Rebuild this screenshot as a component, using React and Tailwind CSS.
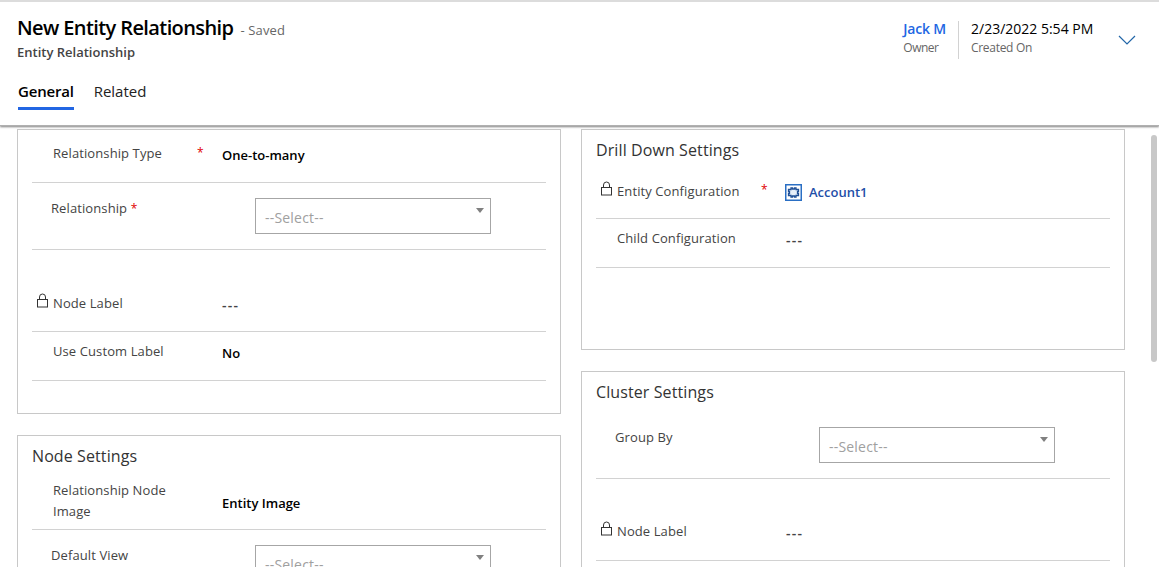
const font = { fontFamily: '"Open Sans", "Noto Sans", sans-serif' };

const Lock = () => (
  <svg width="13" height="15" viewBox="0 0 13 15" fill="none" stroke="#333" strokeWidth="1" className="shrink-0">
    <rect x="1.5" y="6.5" width="10" height="7.5" />
    <path d="M3.5 6.500V4a3 3 0 0 1 6 0v2.500" />
  </svg>
);

const EntityIcon = () => (
  <svg width="17" height="17" viewBox="0 0 17 17" fill="none" className="shrink-0">
    <rect x="0.75" y="0.75" width="15.500" height="15.500" stroke="#2a6fc4" strokeWidth="1.500" />
    <path d="M3.500 5.500H6V4h1.500v1h2V4H11v1.500h2.500V7.500H12.500v2h1V11.500H11V13H9.500v-1h-2v1H6V11.500H3.500V9.500h1v-2h-1z" fill="#e8f0fa" stroke="#1f4f96" strokeWidth="1.300" strokeLinejoin="miter" />
  </svg>
);

const Star = ({ className }) => <span className={`text-[#e00000] text-[12px] leading-none ${className}`}>*</span>;

const Select = () => (
  <div className="w-[236px] h-[36px] border border-[#a6a6a6] flex justify-between pl-[9px] pr-[6px] bg-white">
    <span className="text-[14px] tracking-[0.2px] text-[#a0a0a0] leading-[37px]">--Select--</span>
    <svg width="8" height="5" viewBox="0 0 8 5" className="mt-[9px]">
      <path d="M0 0h8L4 5z" fill="#808080" />
    </svg>
  </div>
);

const Label = ({ children, lock, w, mt }) => (
  <div className={`flex items-start shrink-0 ${w} ${mt}`}>
    {lock && <span className="w-[21px] pl-[4px] -mt-[1px]"><Lock /></span>}
    <span className={`text-[13px] tracking-[0.1px] leading-[18px] text-[#444444] ${lock ? "" : "pl-[21px]"}`}>{children}</span>
  </div>
);

const Value = ({ children, mt }) => (
  <span className={`text-[13px] leading-[18px] font-semibold text-black ml-[1px] ${mt}`}>{children}</span>
);

const Empty = ({ mt }) => (
  <span className={`text-[14px] tracking-[1.300px] leading-[18px] text-[#444444] font-semibold ml-[1px] ${mt}`}>---</span>
);

const Card = ({ title, children, className = "" }) => (
  <section className={`shrink-0 border border-[#c8c8c8] px-[14px] bg-white ${className}`}>
    {title && <h2 className="text-[16px] tracking-[0.1px] leading-[22px] text-[#333333] pt-[9px] pb-[2px]">{title}</h2>}
    {children}
  </section>
);

const Row = ({ h, children, noBorder }) => (
  <div className={`flex items-start ${h} ${noBorder ? "" : "border-b border-[#d2d2d2]"}`}>{children}</div>
);

const SelectLabel = ({ children, mt }) => (
  <div className={`w-[223px] shrink-0 pl-[19px] text-[13px] tracking-[0.1px] leading-[18px] text-[#444444] ${mt}`}>{children}</div>
);

export default function App() {
  return (
    <div style={font} className="w-[1159px] h-[567px] overflow-hidden bg-white flex flex-col">
      <header className="relative z-10 h-[126px] shrink-0 border-t-2 border-[#dcdcdc] bg-white shadow-[0_1px_2px_rgba(0,0,0,0.5)] px-[18px] flex flex-col border-b border-b-[#b0b0b0]">
        <div className="flex justify-between h-[73px]">
          <div className="pt-[12px] -ml-[1px]">
            <div className="flex items-baseline">
              <h1 className="text-[20px] tracking-[-0.6px] leading-[27px] font-semibold text-black">New Entity Relationship</h1>
              <span className="ml-[7px] text-[13px] tracking-[0.15px] text-[#666666]">- Saved</span>
            </div>
            <p className="text-[13px] leading-[18px] font-semibold text-[#444444] mt-[2px]">Entity Relationship</p>
          </div>
          <div className="flex items-start pt-[18px] pr-[5px]">
            <div className="pr-[12px]">
              <div className="text-[14px] tracking-[-0.2px] leading-[18px] font-semibold text-[#2266e3]">Jack M</div>
              <div className="text-[12px] tracking-[-0.5px] leading-[18px] mt-[1px] text-[#666666]">Owner</div>
            </div>
            <div className="w-px h-[38px] mt-[1px] bg-[#d2d2d2]" />
            <div className="pl-[12px] w-[159px]">
              <div className="text-[14px] leading-[18px] text-black">2/23/2022 5:54 PM</div>
              <div className="text-[12px] tracking-[-0.3px] leading-[18px] mt-[1px] text-[#666666]">Created On</div>
            </div>
            <svg width="18" height="10" viewBox="0 0 18 10" fill="none" stroke="#2266a8" strokeWidth="1.200" className="mt-[15px]">
              <path d="M1 1l8 8 8-8" />
            </svg>
          </div>
        </div>
        <nav className="flex gap-[20px]">
          <div className="h-[32px] border-b-[3px] border-[#2266e3] text-[15px] tracking-[-0.2px] leading-[33px] font-semibold text-black box-content">General</div>
          <div className="h-[32px] text-[15px] leading-[33px] text-[#222222]">Related</div>
        </nav>
      </header>

      <main className="flex-1 min-h-0 flex pl-[17px] pt-[3px] overflow-hidden">
        <div className="w-[544px] shrink-0 flex flex-col gap-[21px]">
          <Card className="h-[285px]">
            <Row h="h-[53px]">
              <Label w="w-[165px]" mt="mt-[14px]">Relationship Type</Label>
              <Star className="w-[24px] mt-[17px]" />
              <Value mt="mt-[16px]">One-to-many</Value>
            </Row>
            <Row h="h-[67px]">
              <SelectLabel mt="mt-[16px]">Relationship <Star /></SelectLabel>
              <div className="mt-[15px]"><Select /></div>
            </Row>
            <Row h="h-[82px]">
              <Label lock w="w-[189px]" mt="mt-[44px]">Node Label</Label>
              <Empty mt="mt-[46px]" />
            </Row>
            <Row h="h-[49px]">
              <Label w="w-[189px]" mt="mt-[10px]">Use Custom Label</Label>
              <Value mt="mt-[12px]">No</Value>
            </Row>
          </Card>
          <Card title="Node Settings" className="h-[200px]">
            <Row h="h-[61px]">
              <Label w="w-[189px]" mt="mt-[11px]"><span className="block w-[130px] leading-[21px]">Relationship Node Image</span></Label>
              <Value mt="mt-[25px]">Entity Image</Value>
            </Row>
            <Row h="h-[60px]" noBorder>
              <SelectLabel mt="mt-[16px]">Default View</SelectLabel>
              <div className="mt-[15px]"><Select /></div>
            </Row>
          </Card>
        </div>

        <div className="w-[544px] shrink-0 ml-[20px] flex flex-col gap-[21px]">
          <Card title="Drill Down Settings" className="h-[221px]">
            <Row h="h-[56px]">
              <Label lock w="w-[165px]" mt="mt-[19px]">Entity Configuration</Label>
              <Star className="w-[24px] mt-[21px]" />
              <div className="flex items-center gap-[7px] mt-[20px]">
                <EntityIcon />
                <span className="text-[13px] leading-[18px] font-semibold text-[#1f4fa8]">Account1</span>
              </div>
            </Row>
            <Row h="h-[49px]">
              <Label w="w-[189px]" mt="mt-[10px]">Child Configuration</Label>
              <Empty mt="mt-[12px]" />
            </Row>
          </Card>
          <Card title="Cluster Settings" className="h-[200px]">
            <Row h="h-[74px]">
              <SelectLabel mt="mt-[23px]">Group By</SelectLabel>
              <div className="mt-[22px]"><Select /></div>
            </Row>
            <Row h="h-[82px]">
              <Label lock w="w-[189px]" mt="mt-[43px]">Node Label</Label>
              <Empty mt="mt-[45px]" />
            </Row>
          </Card>
        </div>

        <div className="ml-[26px] mt-[6px] w-[6px] h-[227px] rounded-full bg-[#c8c8c8]" />
      </main>
    </div>
  );
}
